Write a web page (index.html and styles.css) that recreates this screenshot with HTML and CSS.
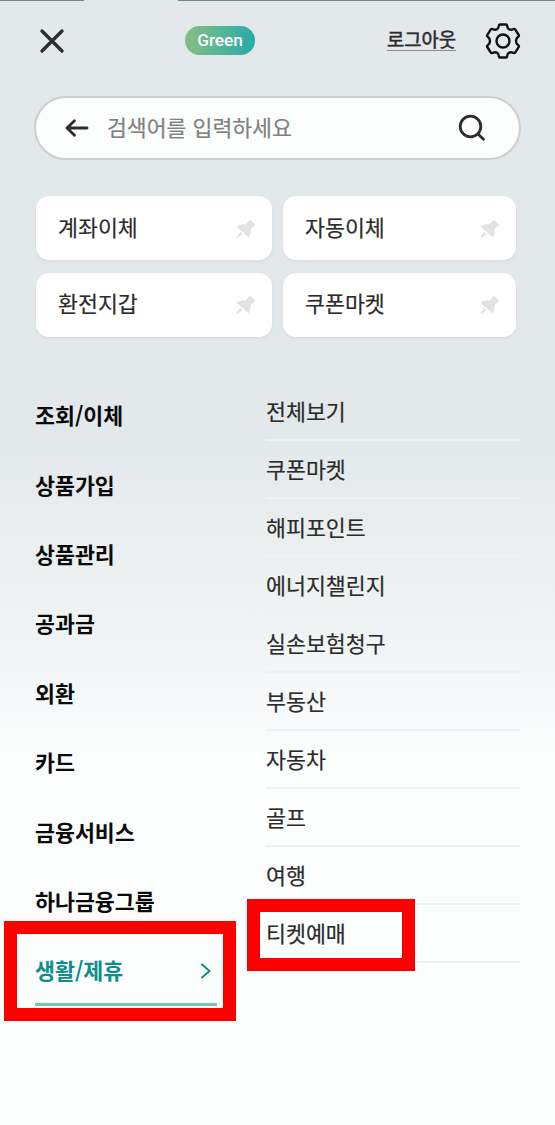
FILE: index.html
```
<!DOCTYPE html>
<html lang="ko">
<head>
  <meta charset="UTF-8">
  <meta name="viewport" content="width=device-width, initial-scale=1.0">
  <title>전체메뉴</title>
  <link rel="stylesheet" href="styles.css">
</head>
<body>
  <svg class="sprite" width="0" height="0">
    <symbol id="pin" viewBox="0 0 20 20">
      <path d="M14.6 1.2 18.9 5.3Q19.4 5.8 18.9 6.3L14.8 9.800Q15 13.800 13 17.800Q12.500 18.200 12 17.800L1 8.300Q.6 7.600 1.300 7.100Q5.200 4.900 9.600 5.500L13.400 1.300Q14 .7 14.600 1.200Z"/>
      <path d="M4.400 13 6.500 14.900 2.300 18.500Q1.200 19.200.6 18.500Q.2 17.700.9 17Z"/>
    </symbol>
  </svg>

  <div class="status-line"><span class="status-gap"></span></div>

  <header class="header">
    <svg class="close" width="26" height="26" viewBox="0 0 26 26"><path d="M3 3 23 23M23 3 3 23"/></svg>
    <span class="badge">Green</span>
    <a class="logout">로그아웃</a>
    <svg class="gear" width="36" height="36" viewBox="0 0 36 36">
      <path d="M15 1.500H21Q21.900 1.500 22.100 2.500Q22.300 5 23.600 5.900Q25.200 7 27 6.600Q29.500 5.500 30.200 6.400L33.700 12Q34.300 13 33.200 13.800Q31 15.300 31 18Q31 20.700 33.200 22.200Q34.300 23 33.700 24L30.200 29.600Q29.500 30.500 27 29.400Q25.200 29 23.600 30.100Q22.300 31 22.100 33.500Q21.900 34.500 21 34.500H15Q14.100 34.500 13.900 33.500Q13.700 31 12.400 30.100Q10.800 29 9 29.400Q6.500 30.500 5.800 29.600L2.300 24Q1.700 23 2.800 22.200Q5 20.700 5 18Q5 15.300 2.800 13.800Q1.700 13 2.300 12L5.800 6.400Q6.500 5.500 9 6.600Q10.800 7 12.400 5.900Q13.700 5 13.900 2.500Q14.100 1.500 15 1.500Z"/>
      <circle cx="18" cy="18" r="6.500"/>
    </svg>
  </header>

  <div class="search">
    <svg class="back" width="26" height="22" viewBox="0 0 26 22"><path d="M23 11H3M10.500 3.700 3 11 10.500 18.300"/></svg>
    <span class="placeholder">검색어를 입력하세요</span>
    <svg class="find" width="28" height="28" viewBox="0 0 28 28"><circle cx="12.500" cy="12.500" r="10.300"/><path d="M20.200 20.200 25.500 25.300"/></svg>
  </div>

  <div class="shortcuts">
    <div class="card"><span>계좌이체</span><svg class="pin"><use href="#pin"/></svg></div>
    <div class="card"><span>자동이체</span><svg class="pin"><use href="#pin"/></svg></div>
    <div class="card"><span>환전지갑</span><svg class="pin"><use href="#pin"/></svg></div>
    <div class="card"><span>쿠폰마켓</span><svg class="pin"><use href="#pin"/></svg></div>
  </div>

  <main class="menu">
    <ul class="categories">
      <li>조회/이체</li>
      <li>상품가입</li>
      <li>상품관리</li>
      <li>공과금</li>
      <li>외환</li>
      <li>카드</li>
      <li>금융서비스</li>
      <li>하나금융그룹</li>
      <li class="active">생활/제휴
        <svg class="arrow" width="12" height="16" viewBox="0 0 12 16"><path d="M2 1.500 9.500 8 2 14.500"/></svg>
        <span class="mark mark-category"></span>
      </li>
    </ul>
    <ul class="items">
      <li>전체보기</li>
      <li>쿠폰마켓</li>
      <li>해피포인트</li>
      <li>에너지챌린지</li>
      <li>실손보험청구</li>
      <li>부동산</li>
      <li>자동차</li>
      <li>골프</li>
      <li>여행</li>
      <li>티켓예매<span class="mark mark-item"></span></li>
    </ul>
  </main>
</body>
</html>
```
FILE: styles.css
```
* {
  box-sizing: border-box;
}

body {
  margin: 0;
  height: 1125px;
  overflow: hidden;
  font-family: "Noto Sans CJK KR", sans-serif;
  font-size: 21.7px;
  color: #2b2b2b;
  background: linear-gradient(#e3e8eb 0, #e3e8eb 430px, #e9edee 520px, #f1f4f5 640px, #f8f9fa 710px, #fcfdfd 770px, #fcfdfd 100%);
}

ul {
  list-style: none;
  margin: 0;
  padding: 0;
}

svg {
  display: block;
  fill: none;
  stroke-linecap: round;
  stroke-linejoin: round;
}

.sprite {
  display: none;
}

.status-line {
  height: 1px;
  padding-left: 84px;
  background: #80818f;
}

.status-gap {
  display: block;
  width: 94px;
  height: 1px;
  background: #e3e8eb;
}

.header {
  display: flex;
  align-items: center;
  height: 79px;
  padding: 0 34px 0 39px;
}

.close {
  stroke: #2d2e30;
  stroke-width: 3.4;
}

.badge {
  width: 70px;
  height: 29px;
  margin-left: 120px;
  border-radius: 15px;
  background: linear-gradient(100deg, #87bf85, #58b598 50%, #22aaa8);
  color: #fff;
  font: 500 17.2px/29px Roboto, sans-serif;
  text-align: center;
}

.logout {
  margin-left: 132px;
  height: 24px;
  margin-top: -3px;
  font-size: 18.8px;
  line-height: 24px;
  border-bottom: 1px solid #85898c;
  -webkit-text-stroke: .5px #2b2b2b;
}

.gear {
  margin-left: auto;
  stroke: #111;
  stroke-width: 2.4;
}

.search {
  display: flex;
  align-items: center;
  width: 487px;
  height: 64px;
  margin: 16px 0 0 34px;
  padding: 0 33px 0 28px;
  border: 2px solid #cbcece;
  border-radius: 32px;
  background: #fcfdfd;
}

.back {
  stroke: #2d2d2d;
  stroke-width: 2.8;
}

.placeholder {
  margin-left: 17px;
  padding-bottom: 2px;
  color: #808080;
  font-size: 21.6px;
  line-height: 32px;
  -webkit-text-stroke: .2px #808080;
}

.find {
  margin-left: auto;
  stroke: #2d2d2d;
  stroke-width: 2.8;
}

.shortcuts {
  display: grid;
  grid-template-columns: 236px 233px;
  grid-auto-rows: 64px;
  gap: 12.5px 11px;
  margin: 36px 0 0 36px;
}

.card {
  display: flex;
  align-items: center;
  justify-content: space-between;
  padding: 0 16px 0 22px;
  border-radius: 13px;
  background: #fff;
  box-shadow: 0 1px 3px rgba(120, 150, 145, .16);
  -webkit-text-stroke: .2px #2b2b2b;
}

.card span {
  padding-bottom: 4px;
}

.pin {
  width: 20px;
  height: 20px;
  margin-top: 1px;
  fill: #e2e2e2;
}

.menu {
  display: grid;
  grid-template-columns: 182px 254px;
  column-gap: 49px;
  align-items: start;
  margin: 45px 0 0 35px;
}

.categories li {
  position: relative;
  display: flex;
  align-items: center;
  justify-content: space-between;
  height: 69.4px;
  padding-bottom: 3px;
  color: #0a0a0a;
  font-weight: 700;
}

.categories .active {
  padding-bottom: 0;
  color: #0b8f88;
  border-bottom: 3px solid #7cc3b5;
}

.arrow {
  margin: 2px 5px 0 0;
  stroke: #0b8f88;
  stroke-width: 2;
}

.items {
  padding-top: 1px;
}

.items li {
  position: relative;
  height: 58px;
  line-height: 56px;
  border-bottom: 2px solid #f0f1f5;
  -webkit-text-stroke: .2px #2b2b2b;
}

/* red outlines over the selected category and item */
.mark {
  position: absolute;
  border: 13px solid #f00;
}

.mark-category {
  left: -31px;
  top: -16px;
  width: 232px;
  height: 100px;
}

.mark-item {
  left: -19px;
  top: -6px;
  width: 168px;
  height: 72px;
}
```
